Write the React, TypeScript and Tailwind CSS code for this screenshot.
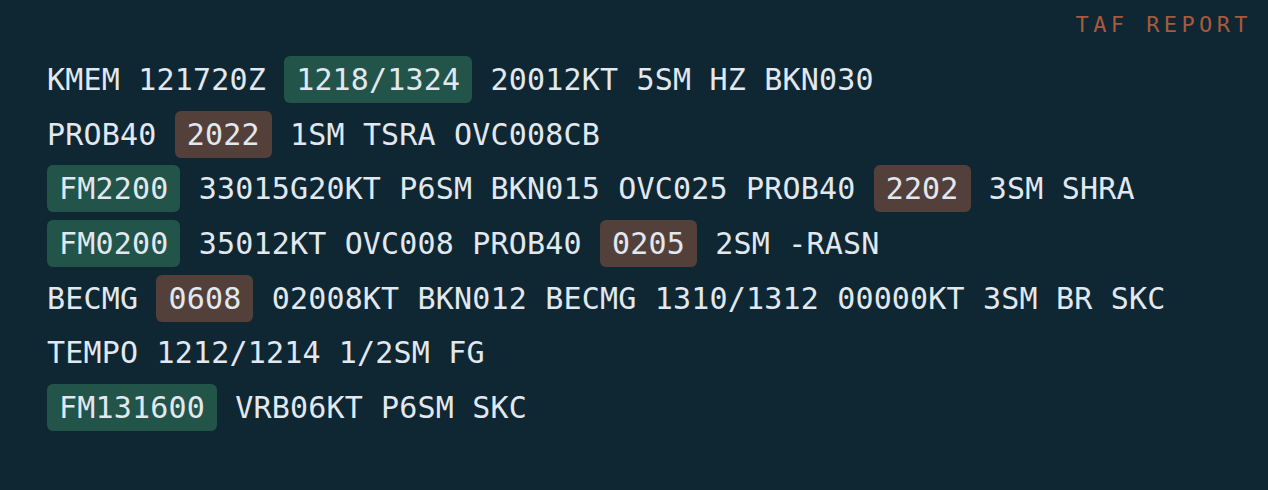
type Tok = { t: string; k?: 'fm' | 'tm' }

const lines: Tok[][] = [
  [{ t: 'KMEM 121720Z ' }, { t: '1218/1324', k: 'fm' }, { t: ' 20012KT 5SM HZ BKN030' }],
  [{ t: 'PROB40 ' }, { t: '2022', k: 'tm' }, { t: ' 1SM TSRA OVC008CB' }],
  [
    { t: 'FM2200', k: 'fm' },
    { t: ' 33015G20KT P6SM BKN015 OVC025 PROB40 ' },
    { t: '2202', k: 'tm' },
    { t: ' 3SM SHRA' },
  ],
  [{ t: 'FM0200', k: 'fm' }, { t: ' 35012KT OVC008 PROB40 ' }, { t: '0205', k: 'tm' }, { t: ' 2SM -RASN' }],
  [{ t: 'BECMG ' }, { t: '0608', k: 'tm' }, { t: ' 02008KT BKN012 BECMG 1310/1312 00000KT 3SM BR SKC' }],
  [{ t: 'TEMPO 1212/1214 1/2SM FG' }],
  [{ t: 'FM131600', k: 'fm' }, { t: ' VRB06KT P6SM SKC' }],
]

export default function App() {
  return (
    <div className="w-[1268px] h-[490px] bg-[#0e2732] relative font-['DejaVu_Sans_Mono',monospace] text-[#e2e8f0]">
      {/* label */}
      <div className="absolute top-[11px] right-[16px] text-[22px] leading-[28px] tracking-[0.2em] text-[#a65a3f]">
        TAF REPORT
      </div>

      <div className="pt-[56px] pl-[47px] flex flex-col gap-[7.7px] text-[30px] tracking-[0.18px]">
        {lines.map((line, i) => (
          <div key={i} className="h-[47px] flex items-center whitespace-pre">
            {line.map((tok, j) =>
              tok.k ? (
                <span
                  key={j}
                  className={
                    'h-[47px] px-[12px] rounded-[6px] flex items-center ' +
                    (tok.k === 'fm' ? 'bg-[#22544a]' : 'bg-[#54403a]')
                  }
                >
                  {tok.t}
                </span>
              ) : (
                <span key={j}>{tok.t}</span>
              )
            )}
          </div>
        ))}
      </div>
    </div>
  )
}
